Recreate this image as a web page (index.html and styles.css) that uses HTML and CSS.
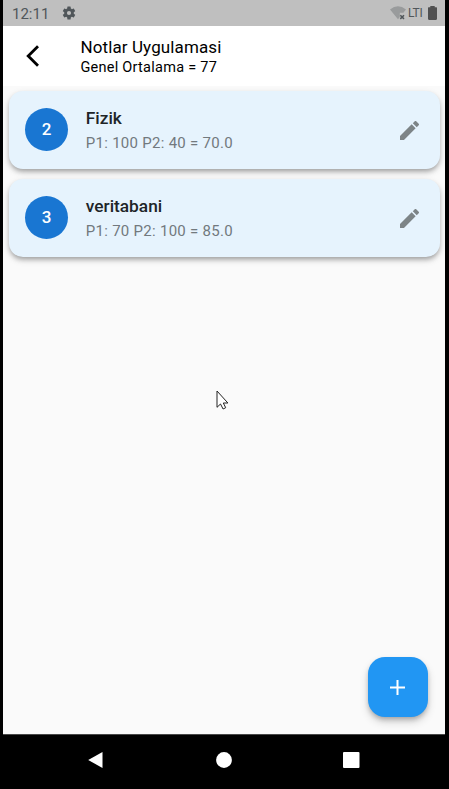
FILE: index.html
```html
<!DOCTYPE html>
<html lang="tr">
<head>
<meta charset="utf-8">
<title>Notlar Uygulamasi</title>
<link rel="stylesheet" href="styles.css">
</head>
<body>
<div class="device">
  <div class="status">
    <span class="clock">12:11</span>
    <svg class="gear" viewBox="0 0 24 24"><path d="M19.14 12.94c.04-.3.06-.61.06-.94s-.02-.64-.07-.94l2.03-1.58a.49.49 0 0 0 .12-.61l-1.92-3.32a.49.49 0 0 0-.59-.22l-2.39.96a7 7 0 0 0-1.62-.94l-.36-2.54A.48.48 0 0 0 13.92 2.4h-3.84a.48.48 0 0 0-.47.41l-.36 2.54c-.59.24-1.13.57-1.62.94l-2.39-.96a.49.49 0 0 0-.59.22L2.74 8.87a.48.48 0 0 0 .12.61l2.03 1.58a6 6 0 0 0 0 1.88l-2.03 1.58a.49.49 0 0 0-.12.61l1.92 3.32c.12.22.37.29.59.22l2.39-.96c.5.38 1.03.7 1.62.94l.36 2.54c.05.24.24.41.48.41h3.84c.24 0 .44-.17.47-.41l.36-2.54a7 7 0 0 0 1.62-.94l2.39.96c.22.08.47 0 .59-.22l1.92-3.32a.48.48 0 0 0-.12-.61zM12 15.1a3.1 3.1 0 1 1 0-6.2 3.1 3.1 0 0 1 0 6.2z"/></svg>
    <svg class="wifi" viewBox="0 0 16 14"><path class="fan" d="M0 3.4Q8-2.8 16 3.4L13.4 6.8H9.8V11L8 13.2Z"/><path class="cross" d="M10.3 9.2l3.7 3.7M14 9.2l-3.7 3.7"/></svg>
    <span class="network">LTI</span>
    <svg class="battery" viewBox="0 0 9 14"><path d="M2.3 0h4.4v1.2H8.5L9 1.8V13l-.8 1H.8L0 13V1.8l.5-.6h1.8z"/></svg>
  </div>
  <header class="appbar">
    <svg class="back" viewBox="0 0 14 22"><path d="M12 1.2L2.2 11 12 20.8"/></svg>
    <div class="heading">
      <h1>Notlar Uygulamasi</h1>
      <p>Genel Ortalama = 77</p>
    </div>
  </header>
  <main class="content">
    <article class="card">
      <div class="avatar">2</div>
      <div class="info"><h2>Fizik</h2><p>P1: 100 P2: 40 = 70.0</p></div>
      <svg class="edit" viewBox="3 3 18 18"><path d="M3 17.25V21h3.75L17.81 9.94l-3.75-3.75L3 17.25zM20.71 7.04a1 1 0 0 0 0-1.41l-2.34-2.34a1 1 0 0 0-1.41 0l-1.83 1.83 3.75 3.75 1.83-1.83z"/></svg>
    </article>
    <article class="card">
      <div class="avatar">3</div>
      <div class="info"><h2>veritabani</h2><p>P1: 70 P2: 100 = 85.0</p></div>
      <svg class="edit" viewBox="3 3 18 18"><path d="M3 17.25V21h3.75L17.81 9.94l-3.75-3.75L3 17.25zM20.71 7.04a1 1 0 0 0 0-1.41l-2.34-2.34a1 1 0 0 0-1.41 0l-1.83 1.83 3.75 3.75 1.83-1.83z"/></svg>
    </article>
    <button class="fab" aria-label="Ekle"><svg viewBox="0 0 15 15"><path d="M7.5 0v15M0 7.5h15"/></svg></button>
  </main>
  <nav class="navbar">
    <svg viewBox="0 0 18 18"><path d="M1.2 9L15.5 1v16z"/></svg>
    <svg viewBox="0 0 18 18"><circle cx="9" cy="9" r="7.9"/></svg>
    <svg viewBox="0 0 18 18"><rect x="1" y="1" width="16.5" height="16" rx="1"/></svg>
  </nav>
  <svg class="cursor" viewBox="0 0 13 20"><path d="M1 1v16.3l3.5-3.3 2.6 5 2.6-1.3-2.4-4.7h4.6z"/></svg>
</div>
</body>
</html>
```

FILE: styles.css
```css
* { box-sizing: border-box; margin: 0; }

body {
  background: #000;
  font-family: Roboto, sans-serif;
  overflow: hidden;
}

.device {
  position: relative;
  display: flex;
  flex-direction: column;
  width: 442px;
  height: 789px;
  margin-left: 3px;
}

.status {
  display: flex;
  align-items: center;
  height: 26px;
  padding: 0 8px 0 9px;
  background: #bfbfbf;
  color: #50565a;
}

.clock { width: 49px; font-size: 15px; line-height: 26px; padding-top: 1px; }
.gear { width: 16px; height: 16px; fill: #50565a; }
.wifi { width: 16px; height: 14px; margin-left: auto; }
.fan { fill: #999b9c; }
.cross { stroke: #50565a; stroke-width: 1.5; }
.network { width: 15px; margin: 0 5px 0 2px; font-size: 12px; line-height: 26px; letter-spacing: -0.3px; }
.battery { width: 9px; height: 14px; fill: #505050; }

.appbar {
  display: flex;
  height: 60px;
  background: #fff;
  color: #000;
}

.back {
  width: 14px;
  height: 22px;
  margin: 19px 40px 0 23px;
  fill: none;
  stroke: #000;
  stroke-width: 2.8;
}

.heading { padding: 11px 0 0 0.4px; }
.heading h1 { font-size: 17px; font-weight: 400; line-height: 20px; letter-spacing: .12px; }
.heading p { font-size: 14.5px; line-height: 21px; letter-spacing: .26px; }

.content {
  position: relative;
  display: flex;
  flex-direction: column;
  gap: 10px;
  height: 648px;
  padding: 5px 5px 0 5.5px;
  background: #fafafa;
}

.card {
  display: flex;
  align-items: flex-start;
  height: 78px;
  padding: 15px 21.5px 0 16.5px;
  border-radius: 14px;
  background: #e6f3fd;
  box-shadow: 0 3px 5px -1px rgba(0, 0, 0, .28), 0 3px 7px rgba(0, 0, 0, .15);
}

.avatar {
  width: 43px;
  height: 43px;
  margin-top: 2px;
  border-radius: 50%;
  background: #1976d2;
  color: #fff;
  font-size: 17px;
  font-weight: 500;
  line-height: 43px;
  text-align: center;
}

.info { flex: 1; margin-left: 17.8px; }
.info h2 { font-size: 17.3px; font-weight: 500; line-height: 24px; color: #202427; }
.info p { font-size: 15px; line-height: 26px; letter-spacing: .28px; color: #72797e; }
.edit { width: 19px; height: 19px; margin-top: 14.5px; fill: #7d8487; }

.fab {
  position: absolute;
  right: 17px;
  bottom: 17px;
  display: flex;
  align-items: center;
  justify-content: center;
  width: 60px;
  height: 60px;
  padding: 0 1px 0 0;
  border: 0;
  border-radius: 17px;
  background: #2196f3;
  box-shadow: 0 3px 5px -1px rgba(0, 0, 0, .24), 0 5px 9px rgba(0, 0, 0, .16);
}

.fab svg { width: 15px; height: 15px; stroke: #fff; stroke-width: 2; }

.navbar {
  display: flex;
  justify-content: space-between;
  height: 55px;
  padding: 16px 85px 0 84px;
  border-top: 1px solid #484848;
  background: #000;
}

.navbar svg { width: 18px; height: 18px; fill: #fff; }

.cursor {
  position: absolute;
  left: 213px;
  top: 390px;
  width: 13px;
  height: 20px;
  fill: #fff;
  stroke: #222;
}
```
